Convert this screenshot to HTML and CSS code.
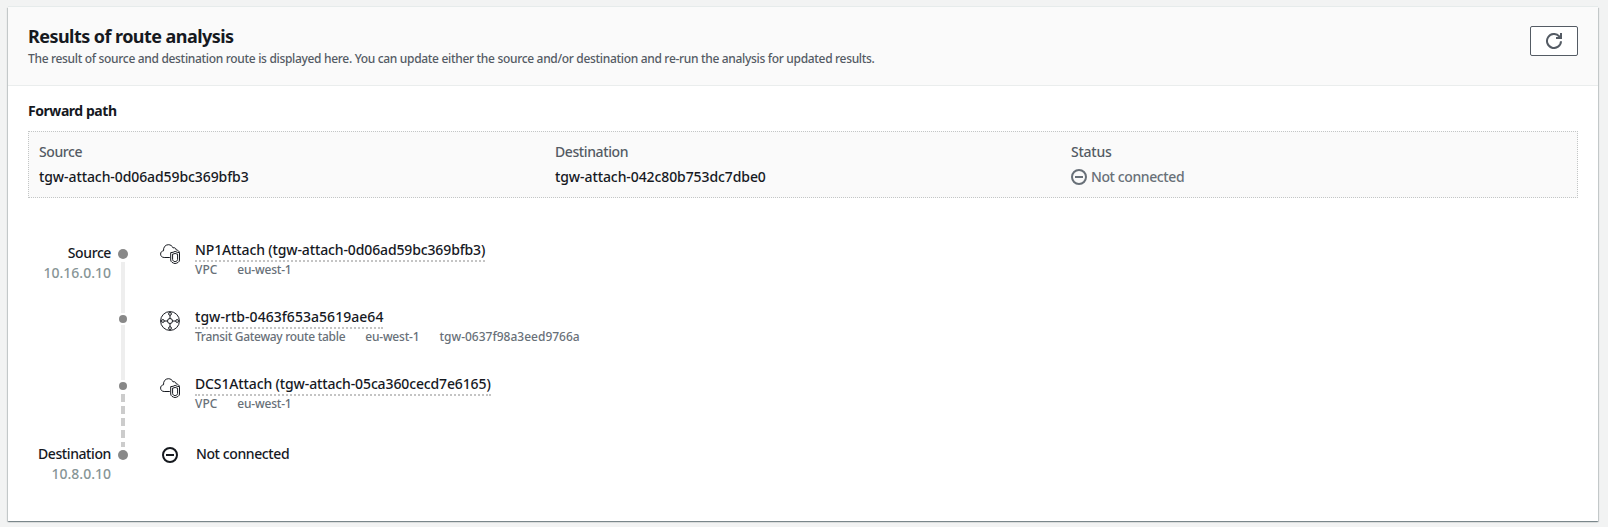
FILE: index.html
```
<!DOCTYPE html>
<html lang="en">
<head>
<meta charset="utf-8">
<title>Results of route analysis</title>
<link rel="stylesheet" href="styles.css">
</head>
<body>
<svg class="sprite" aria-hidden="true">
  <symbol id="vpc" viewBox="0 0 20 20">
    <path d="M9.8 13.5H4.2C1.9 13.4.6 12 .6 10.1c0-1.9 1.1-3 2.9-3.3C3.300 3.100 5.300.8 8.300.7c2.300 0 3.900 1.200 4.700 3.200 1.700-.6 3 .3 3.200 2 1.700.2 2.800 1.100 3.200 2.500"/>
    <path d="M15.100 7.400c1.300 .8 2.700 1.200 4.400 1.200v7.400c0 2-2 3-4.400 3.600-2.400-.6-4.400-1.600-4.400-3.600V8.600c1.700 0 3.100-.4 4.400-1.200z"/>
    <path d="M15.100 9.400c.8.4 1.500.6 2.500.7v5.400c0 1.200-1 1.800-2.500 2.200-1.500-.4-2.500-1-2.500-2.200v-5.400c1-.1 1.700-.3 2.500-.7z"/>
  </symbol>
  <symbol id="gateway" viewBox="0 0 20 20">
    <circle cx="10" cy="10" r="9.400"/>
    <circle cx="10" cy="10" r="2.500"/>
    <circle cx="10" cy="2.900" r="1.400"/>
    <circle cx="10" cy="17.100" r="1.400"/>
    <circle cx="2.900" cy="10" r="1.400"/>
    <circle cx="17.100" cy="10" r="1.400"/>
    <path d="M10 4.300v3.200M10 12.500v3.200M4.300 10h3.200M12.500 10h3.200"/>
  </symbol>
  <symbol id="stopped" viewBox="0 0 16 16">
    <circle cx="8" cy="8" r="7"/>
    <path d="M4 8h8"/>
  </symbol>
</svg>
<main class="card">
  <header class="card-header">
    <div>
      <h2 class="title">Results of route analysis</h2>
      <p class="description">The result of source and destination route is displayed here. You can update either the source and/or destination and re-run the analysis for updated results.</p>
    </div>
    <button class="refresh" aria-label="Refresh">
      <svg class="refresh-icon" viewBox="0 0 16 16"><path d="M15 8.200A7 7 0 1 1 13.200 3.300L14.500 4.600"/><path d="M15 0v5H10"/></svg>
    </button>
  </header>
  <section class="content">
    <h3 class="section-title">Forward path</h3>
    <div class="summary">
      <div>
        <div class="label word">Source</div>
        <div class="value id">tgw-attach-0d06ad59bc369bfb3</div>
      </div>
      <div>
        <div class="label word">Destination</div>
        <div class="value id">tgw-attach-042c80b753dc7dbe0</div>
      </div>
      <div>
        <div class="label status-label">Status</div>
        <div class="status word"><svg class="stopped"><use href="#stopped"/></svg>Not connected</div>
      </div>
    </div>
    <div class="path">
      <div class="ends">
        <div><div class="word">Source</div><div class="ip">10.16.0.10</div></div>
        <div><div class="word">Destination</div><div class="ip">10.8.0.10</div></div>
      </div>
      <div class="track">
        <i class="dot large"></i><i class="line first"></i>
        <i class="dot"></i><i class="line second"></i>
        <i class="dot"></i><i class="dashes"></i>
        <i class="dot large"></i>
      </div>
      <div class="hops">
        <div class="hop">
          <svg class="service"><use href="#vpc"/></svg>
          <div>
            <span class="name">NP1Attach (tgw-attach-0d06ad59bc369bfb3)</span>
            <div class="meta"><span>VPC</span><span class="region">eu-west-1</span></div>
          </div>
        </div>
        <div class="hop">
          <svg class="service"><use href="#gateway"/></svg>
          <div>
            <span class="name table">tgw-rtb-0463f653a5619ae64</span>
            <div class="meta"><span class="kind">Transit Gateway route table</span><span class="region">eu-west-1</span><span>tgw-0637f98a3eed9766a</span></div>
          </div>
        </div>
        <div class="hop">
          <svg class="service"><use href="#vpc"/></svg>
          <div>
            <span class="name">DCS1Attach (tgw-attach-05ca360cecd7e6165)</span>
            <div class="meta"><span>VPC</span><span class="region">eu-west-1</span></div>
          </div>
        </div>
        <div class="hop last">
          <svg class="stopped"><use href="#stopped"/></svg>
          <div class="word">Not connected</div>
        </div>
      </div>
    </div>
  </section>
</main>
</body>
</html>
```
FILE: styles.css
```
* { box-sizing: border-box; }
body {
  margin: 0;
  padding: 7px 10px 6px 8px;
  height: 527px;
  background: #f2f3f3;
  color: #16191f;
  font: 500 14px/20px "Noto Sans", sans-serif;
}
h2, h3, p { margin: 0; }
.sprite { position: absolute; width: 0; height: 0; }
svg { fill: none; stroke: currentColor; flex: none; }

.card {
  height: 514px;
  background: #fff;
  box-shadow: 0 1px 1px 0 rgba(0, 28, 36, .3), 1px 1px 1px 0 rgba(0, 28, 36, .15), -1px 1px 1px 0 rgba(0, 28, 36, .15), 0 -1px 0 0 #e6ebeb;
}
.card-header {
  display: flex;
  justify-content: space-between;
  height: 79px;
  padding: 18px 20px 0;
  background: #fafafa;
  border-bottom: 1px solid #eaeded;
}
.title {
  font-size: 18px;
  line-height: 22px;
  font-weight: 700;
  letter-spacing: -.55px;
}
.description {
  padding-top: 4px;
  font-size: 12px;
  line-height: 16px;
  letter-spacing: -.32px;
  color: #545b64;
}
.refresh {
  display: grid;
  place-items: center;
  width: 48px;
  height: 30px;
  margin-top: 1px;
  padding: 0;
  background: #fff;
  border: 1px solid #545b64;
  border-radius: 2px;
  color: #545b64;
}
.refresh-icon { width: 16px; height: 16px; stroke-width: 2; }

.content { padding: 14px 20px 0; }
.section-title {
  font-size: 14px;
  line-height: 22px;
  font-weight: 700;
  letter-spacing: -.45px;
}
.summary {
  display: grid;
  grid-template-columns: repeat(3, 516px);
  height: 67px;
  margin-top: 9px;
  padding: 10px;
  background: #fafafa;
  border: 1px dotted #c3c6c6;
}
.label { color: #545b64; }
.value, .status { margin-top: 5px; }
.word { letter-spacing: -.4px; }
.status-label { letter-spacing: -.25px; }
.id { letter-spacing: -.09px; }
.status { display: flex; align-items: center; gap: 4px; color: #687078; }
.stopped { width: 16px; height: 16px; stroke-width: 2; }

.path { display: flex; padding-top: 42px; }
.ends {
  display: flex;
  flex-direction: column;
  gap: 161px;
  width: 83px;
  padding-top: 3px;
  text-align: right;
}
.ip { color: #879596; }
.track {
  display: flex;
  flex-direction: column;
  align-items: center;
  width: 10px;
  margin-left: 7px;
  padding-top: 9px;
}
.dot { width: 8px; height: 8px; border-radius: 50%; background: #888; }
.large { width: 10px; height: 10px; }
.line { width: 4px; background: #eee; }
.first { height: 51px; margin: 3px 0 2px; }
.second { height: 55px; margin: 2px 0; }
.dashes {
  width: 4px;
  height: 53px;
  margin: 4px 0 3px;
  background: repeating-linear-gradient(#ccc 0 8px, transparent 8px 12px);
}
.hops { margin-left: 32px; }
.hop { display: flex; gap: 15px; height: 67px; }
.service { width: 20px; height: 20px; margin-top: 4px; stroke-width: 1; }
.name {
  display: block;
  width: fit-content;
  height: 22px;
  border-bottom: 2px dotted #c4c4c4;
  letter-spacing: -.13px;
}
.table { letter-spacing: .04px; }
.meta {
  display: flex;
  gap: 20px;
  font-size: 12px;
  line-height: 16px;
  color: #687078;
}
.region { letter-spacing: -.2px; }
.kind { letter-spacing: -.3px; }
.last { gap: 18px; padding: 3px 0 0 2px; }
.last .stopped { margin-top: 3px; }
```
